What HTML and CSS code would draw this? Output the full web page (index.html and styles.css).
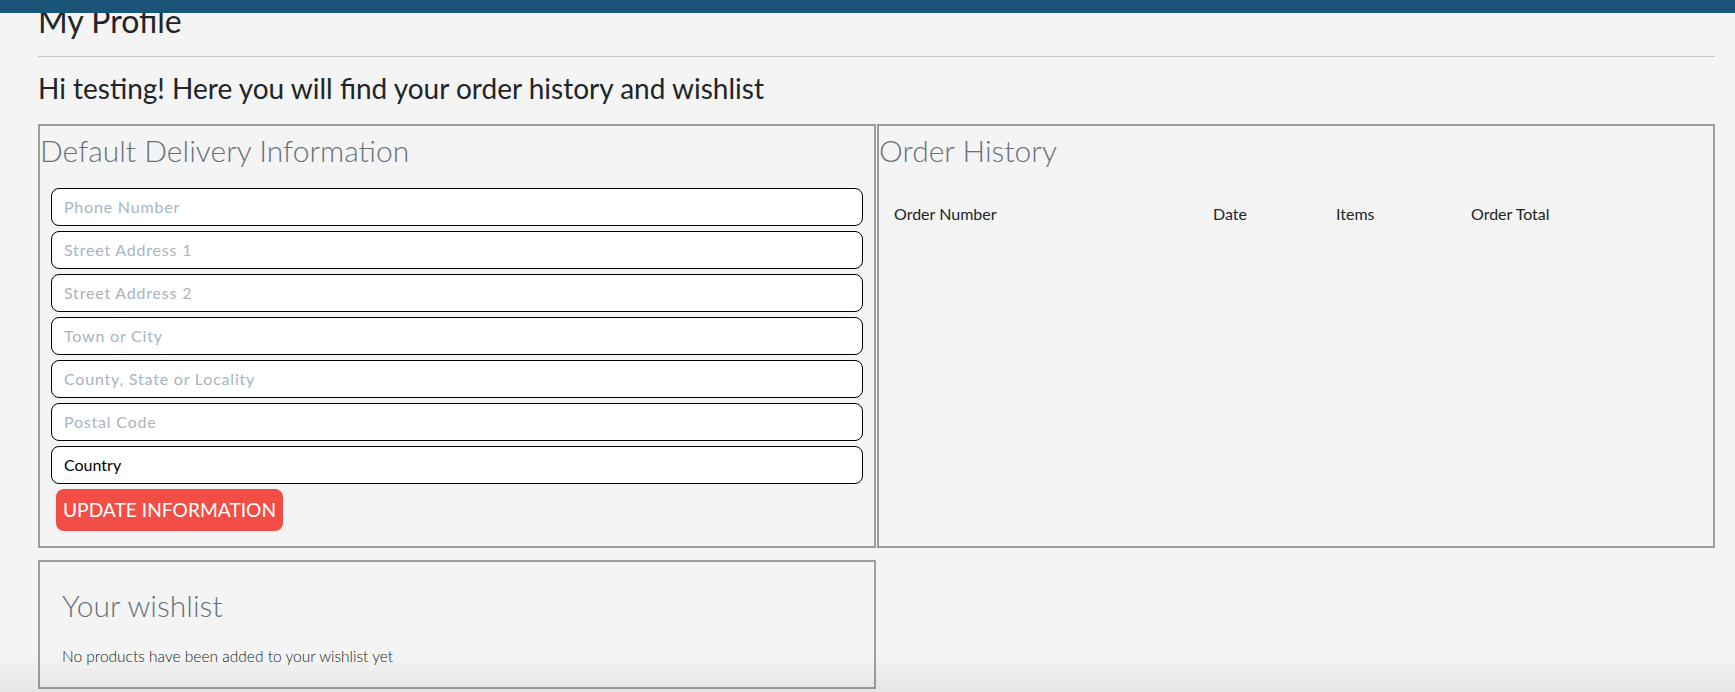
FILE: index.html
```html
<!DOCTYPE html>
<html lang="en">
<head>
<meta charset="utf-8">
<title>My Profile</title>
<link rel="stylesheet" href="styles.css">
</head>
<body>
<header class="topbar"></header>
<main class="page">
  <h1 class="page-title">My Profile</h1>
  <hr class="divider">
  <h2 class="greeting">Hi testing! Here you will find your order history and wishlist</h2>
  <div class="panels">
    <section class="panel delivery">
      <h3 class="panel-title">Default Delivery Information</h3>
      <form class="delivery-form">
        <input class="field" type="text" placeholder="Phone Number">
        <input class="field" type="text" placeholder="Street Address 1">
        <input class="field" type="text" placeholder="Street Address 2">
        <input class="field" type="text" placeholder="Town or City">
        <input class="field" type="text" placeholder="County, State or Locality">
        <input class="field" type="text" placeholder="Postal Code">
        <select class="field field-select">
          <option>Country</option>
        </select>
        <button class="update-btn" type="button">UPDATE INFORMATION</button>
      </form>
    </section>
    <section class="panel orders">
      <h3 class="panel-title">Order History</h3>
      <table class="orders-table">
        <colgroup>
          <col class="col-number">
          <col class="col-date">
          <col class="col-items">
          <col class="col-total">
        </colgroup>
        <thead>
          <tr>
            <th>Order Number</th>
            <th>Date</th>
            <th>Items</th>
            <th>Order Total</th>
          </tr>
        </thead>
        <tbody></tbody>
      </table>
    </section>
    <section class="panel wishlist">
      <h3 class="wishlist-title">Your wishlist</h3>
      <p class="wishlist-empty">No products have been added to your wishlist yet</p>
    </section>
  </div>
</main>
</body>
</html>
```

FILE: styles.css
```css
* {
  box-sizing: border-box;
}

html, body {
  margin: 0;
  padding: 0;
}

body {
  background: #f4f4f4;
  font-family: "Lato", "Noto Sans", sans-serif;
  color: #212529;
  overflow: hidden;
  height: 692px;
}

body::after {
  content: "";
  position: fixed;
  left: 0;
  right: 0;
  bottom: 0;
  height: 36px;
  background: linear-gradient(to bottom, rgba(0, 0, 0, 0), rgba(0, 0, 0, 0.06));
  pointer-events: none;
}

.topbar {
  position: fixed;
  top: 0;
  left: 0;
  right: 0;
  height: 13px;
  background: #1a5479;
  z-index: 10;
}

.page {
  width: 1677px;
  margin-left: 38px;
}

.page-title {
  margin: 2px 0 0;
  font-size: 32px;
  font-weight: 400;
  line-height: 1.2;
  color: #212529;
}

.divider {
  margin: 16px 0 0;
  border: 0;
  border-top: 1px solid #c4c4c4;
  height: 0;
}

.greeting {
  margin: 15px 0 0;
  font-size: 28px;
  font-weight: 400;
  line-height: 1.2;
  color: #212529;
}

.panels {
  display: grid;
  grid-template-columns: 838px 838px;
  column-gap: 1px;
  row-gap: 12px;
  margin-top: 18px;
}

.panel {
  border: 2px solid #9e9e9e;
  background: #f4f4f4;
}

.panel-title {
  margin: 6px 0 0;
  font-size: 30px;
  font-weight: 300;
  line-height: 1.2;
  color: #67727d;
}

.delivery {
  padding: 0 0 15px;
}

.delivery-form {
  display: flex;
  flex-direction: column;
  align-items: stretch;
  gap: 5px;
  padding: 20px 11px 0;
}

.field {
  display: block;
  width: 100%;
  height: 38px;
  margin: 0;
  padding: 0 12px;
  border: 1px solid #000;
  border-radius: 8px;
  background: #fff;
  font-family: "Lato", "Noto Sans", sans-serif;
  font-size: 16px;
  letter-spacing: 0.8px;
  color: #000;
  outline: none;
}

.field::placeholder {
  color: #a9b4bf;
  opacity: 1;
}

.field-select {
  appearance: none;
  -webkit-appearance: none;
  letter-spacing: 0;
  color: #000;
}

.update-btn {
  align-self: flex-start;
  margin-left: 5px;
  height: 42px;
  padding: 0 7px;
  border: 0;
  border-radius: 8px;
  background: #f24e46;
  color: #fff;
  font-family: "Lato", "Noto Sans", sans-serif;
  font-size: 19.2px;
  font-weight: 400;
  cursor: pointer;
}

.orders-table {
  margin-top: 24px;
  width: 100%;
  border-collapse: collapse;
  table-layout: fixed;
}

.col-number {
  width: 334px;
}

.col-date {
  width: 123px;
}

.col-items {
  width: 135px;
}

.orders-table th {
  padding: 12px 0 12px 15px;
  text-align: left;
  font-size: 16px;
  font-weight: 400;
  line-height: 1.2;
  color: #212529;
}

.orders-table th + th {
  padding-left: 0;
}

.wishlist {
  grid-column: 1;
  height: 129px;
  padding: 25px 22px 0;
}

.wishlist-title {
  margin: 0;
  font-size: 30px;
  font-weight: 300;
  line-height: 1.2;
  color: #67727d;
}

.wishlist-empty {
  margin: 24px 0 0;
  font-size: 15.5px;
  font-weight: 300;
  line-height: 1.2;
  color: #212529;
}
```
